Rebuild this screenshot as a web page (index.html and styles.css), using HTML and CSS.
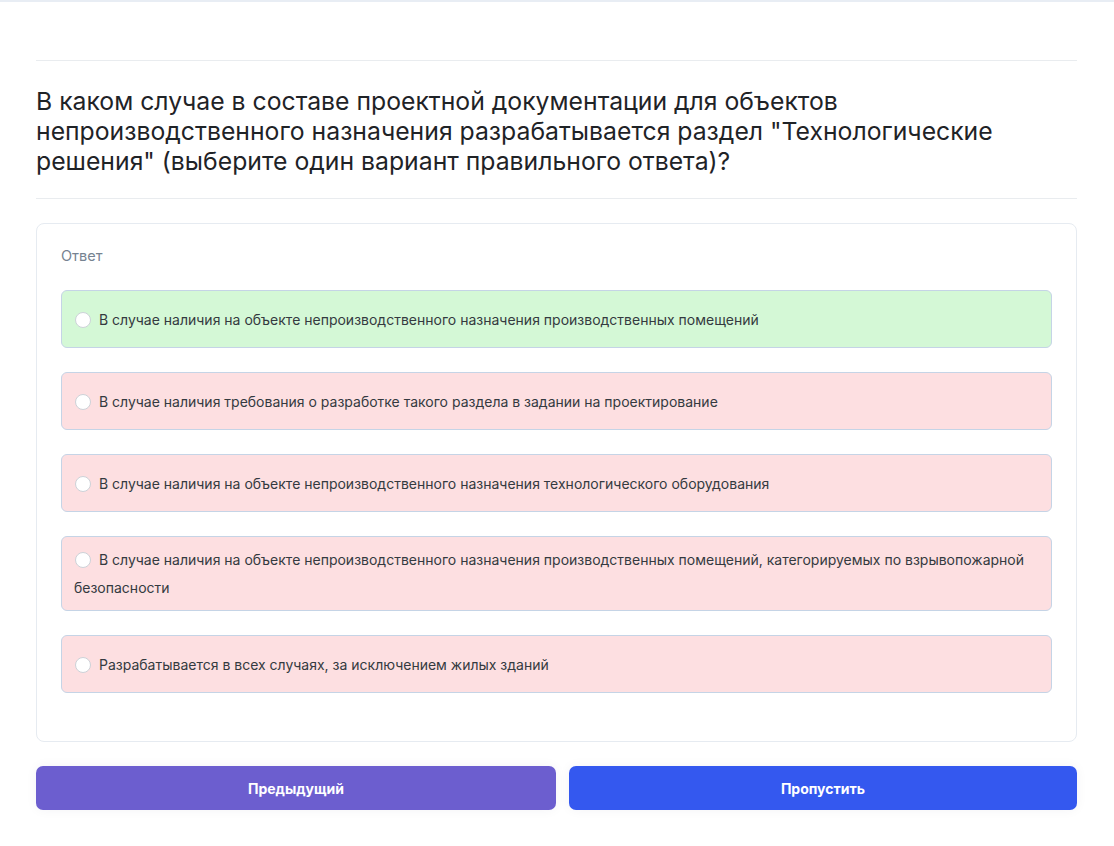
FILE: index.html
```html
<!DOCTYPE html>
<html lang="ru">
<head>
<meta charset="utf-8">
<title>Вопрос</title>
<link rel="stylesheet" href="styles.css">
</head>
<body>
<div class="topline"></div>
<main class="page">
  <hr class="sep first">
  <h1 class="question">В каком случае в составе проектной документации для объектов непроизводственного назначения разрабатывается раздел "Технологические решения" (выберите один вариант правильного ответа)?</h1>
  <hr class="sep">
  <section class="card">
    <div class="label">Ответ</div>
    <div class="option correct"><label><span class="radio"></span>В случае наличия на объекте непроизводственного назначения производственных помещений</label></div>
    <div class="option wrong"><label><span class="radio"></span>В случае наличия требования о разработке такого раздела в задании на проектирование</label></div>
    <div class="option wrong"><label><span class="radio"></span>В случае наличия на объекте непроизводственного назначения технологического оборудования</label></div>
    <div class="option wrong"><label><span class="radio"></span>В случае наличия на объекте непроизводственного назначения производственных помещений, категорируемых по взрывопожарной безопасности</label></div>
    <div class="option wrong"><label><span class="radio"></span>Разрабатывается в всех случаях, за исключением жилых зданий</label></div>
  </section>
  <div class="actions">
    <button class="btn prev">Предыдущий</button>
    <button class="btn skip">Пропустить</button>
  </div>
</main>
</body>
</html>
```

FILE: styles.css
```css
* { box-sizing: border-box; }
html, body { margin: 0; padding: 0; background: #ffffff; }
body {
  font-family: Inter, "Noto Sans", sans-serif;
  color: #212529;
}
.topline {
  height: 2px;
  background: #e8edf4;
}
.page {
  padding: 0 37px 36px 36px;
}
.sep {
  border: 0;
  border-top: 1px solid #e9ecef;
  margin: 0;
}
.sep.first { margin-top: 58px; }
.question {
  font-size: 24.75px;
  line-height: 30px;
  font-weight: 400;
  color: #1f2327;
  margin: 25px 0 22px 0;
  letter-spacing: 0;
}
.card {
  margin-top: 24px;
  border: 1px solid #e6ebf1;
  border-radius: 8px;
  padding: 22px 24px 24px 24px;
}
.label {
  font-size: 14.5px;
  line-height: 20px;
  color: #768391;
  margin-bottom: 24px;
}
.option {
  display: flex;
  align-items: center;
  min-height: 58px;
  border: 1px solid #c5d4e6;
  border-radius: 6px;
  padding: 9px 12px 8px 12px;
  margin-bottom: 24px;
  font-size: 14px;
  line-height: 28px;
  color: #343a40;
}
.option.correct { background: #d4f8d6; }
.option.wrong { background: #fddfe1; }
.radio {
  display: inline-block;
  width: 16px;
  height: 16px;
  border-radius: 50%;
  background: #ffffff;
  border: 1px solid #cdd2d8;
  vertical-align: -3px;
  margin: 0 8px 0 1px;
}
.actions {
  display: flex;
  gap: 13px;
  margin-top: 24px;
}
.btn {
  flex: 1 1 auto;
  height: 44px;
  border: 0;
  border-radius: 7px;
  color: #ffffff;
  font-family: Inter, "Noto Sans", sans-serif;
  font-size: 14px;
  font-weight: 700;
  box-shadow: 0 0 12px rgba(30, 40, 80, 0.05);
}
.btn.prev { background: #6c5ecf; }
.btn.skip { background: #3458ef; }
```
